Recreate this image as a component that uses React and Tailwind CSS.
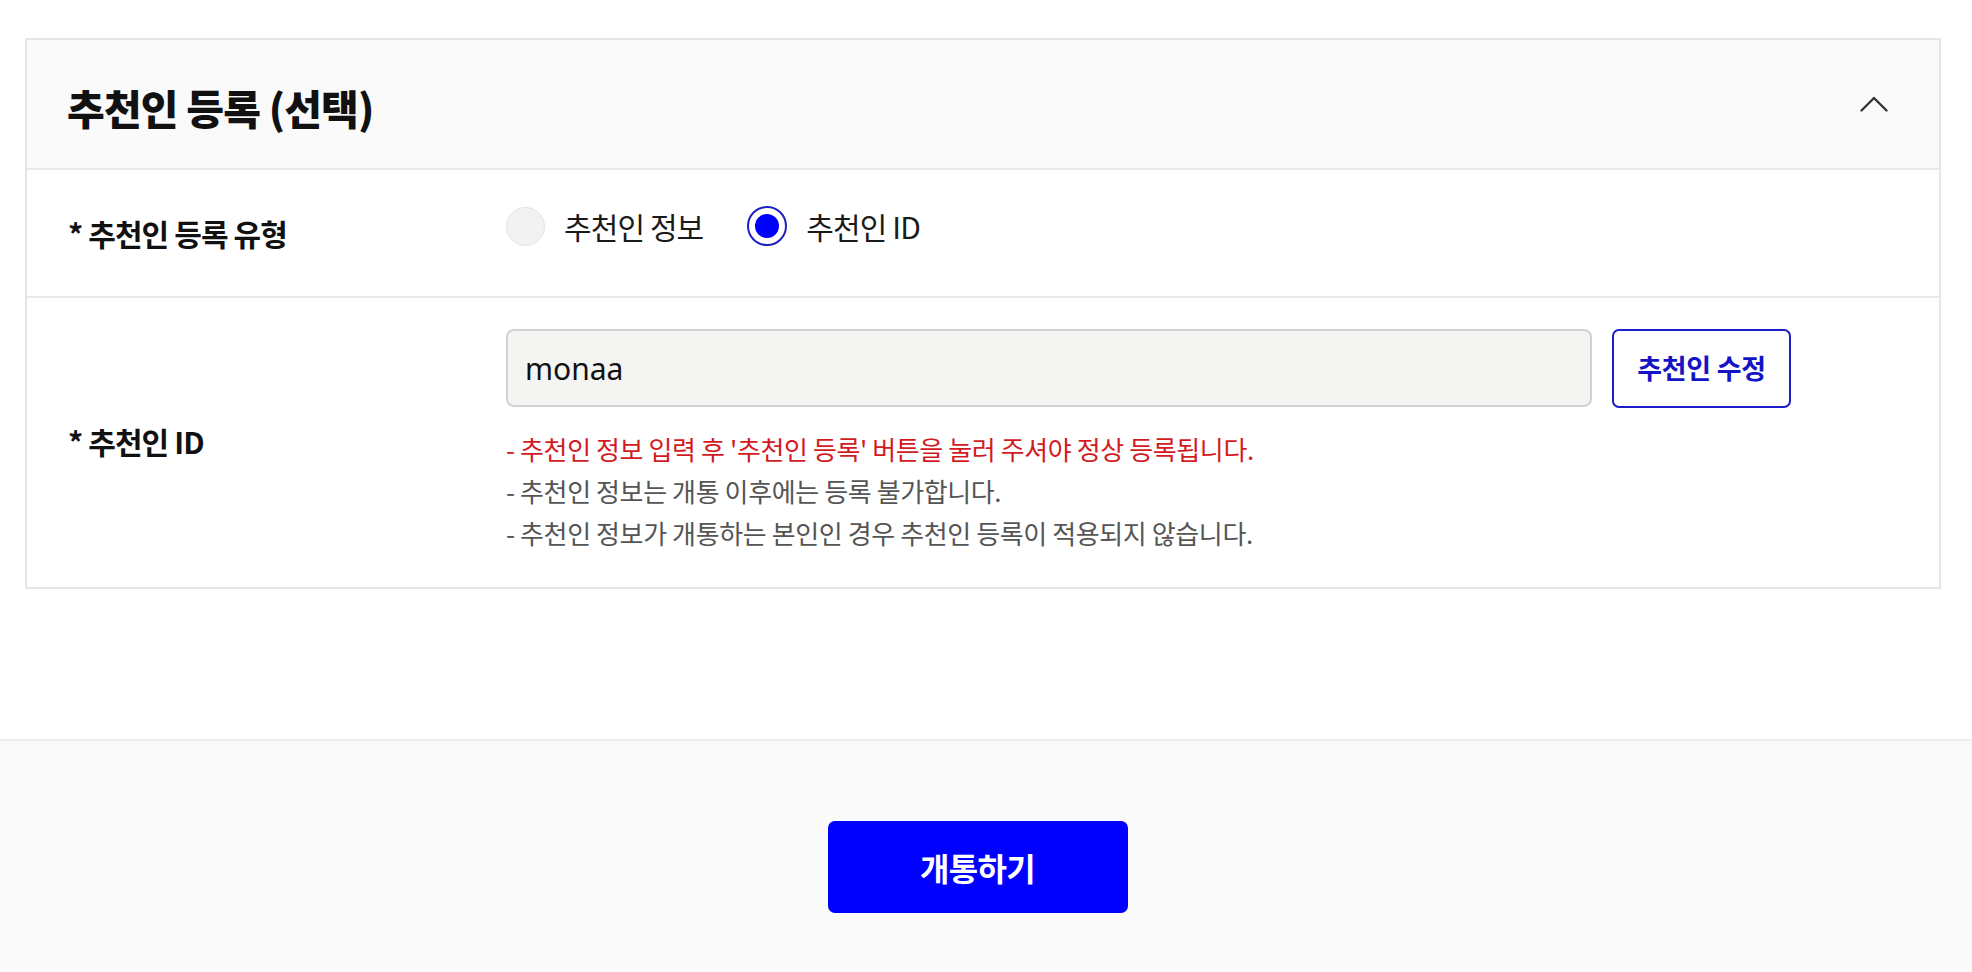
import React, { useState } from 'react';

const FONT = "font-['Noto_Sans_CJK_KR','Noto_Sans',sans-serif]";

const Radio = ({ checked, label, onClick }) => (
    <button type="button" onClick={onClick} className="flex items-center gap-[19px]">
        {checked ? (
            <span className="w-[40px] h-[40px] rounded-full border-2 border-[#2020c4] flex items-center justify-center bg-white">
                <span className="w-[24px] h-[24px] rounded-full bg-[#0000ff]" />
            </span>
        ) : (
            <span className="w-[39px] h-[39px] rounded-full bg-[#f2f2f2] border border-[#e4e4e4]" />
        )}
        <span className="text-[30px] leading-none tracking-[-0.03em] text-[#1a1a1a]">{label}</span>
    </button>
);

const Row = ({ label, children, className }) => (
    <div className={`flex items-center ${className}`}>
        <div className="w-[479px] shrink-0 pl-[41px] text-[30px] font-semibold tracking-[-0.03em] text-[#111]">
            {label}
        </div>
        <div className="flex-1">{children}</div>
    </div>
);

export default function App() {
    const [type, setType] = useState('id');
    const [open, setOpen] = useState(true);

    return (
        <div className={`min-h-screen flex flex-col bg-white ${FONT}`}>
            <div className="pt-[38px] pl-[25px] pr-[31px]">
                <section className="border-2 border-[#e6e6e6]">
                    <div className="h-[130px] bg-[#fafafa] border-b-2 border-[#e8e8e8] flex items-center justify-between pl-[40px] pr-[51px]">
                        <h2 className="text-[41px] font-extrabold tracking-[-0.02em] text-[#111] leading-none pt-[6px]">
                            추천인 등록 (선택)
                        </h2>
                        <button type="button" onClick={() => setOpen(!open)}>
                            <svg width="28" height="16" viewBox="0 0 28 16" fill="none">
                                <path d="M1.5 14.5 L14 2 L26.5 14.5" stroke="#333" strokeWidth="2.4" strokeLinecap="round" strokeLinejoin="round" />
                            </svg>
                        </button>
                    </div>

                    {open && (
                        <>
                            <Row label="* 추천인 등록 유형" className="h-[128px] border-b-2 border-[#e8e8e8]">
                                <div className="flex items-center gap-[44px] -mt-[14px]">
                                    <Radio checked={type === 'info'} label="추천인 정보" onClick={() => setType('info')} />
                                    <Radio checked={type === 'id'} label="추천인 ID" onClick={() => setType('id')} />
                                </div>
                            </Row>

                            <Row label="* 추천인 ID" className="pt-[31px] pb-[33px]">
                                <div className="flex items-start gap-[20px]">
                                    <div className="w-[1086px] h-[78px] rounded-[8px] bg-[#f4f4f3] border-2 border-[#d2d2d2] flex items-center pl-[17px] font-['Noto_Sans',sans-serif] text-[30px] text-[#111]">
                                        monaa
                                    </div>
                                    <button type="button" className="w-[179px] h-[79px] rounded-[7px] border-2 border-[#1e1ec8] text-[#1414c4] text-[27px] font-bold tracking-[-0.01em]">
                                        추천인 수정
                                    </button>
                                </div>
                                <ul className="mt-[20px] text-[26px] leading-[42px] tracking-[-0.015em]">
                                    <li className="text-[#d21b1f]">- 추천인 정보 입력 후 '추천인 등록' 버튼을 눌러 주셔야 정상 등록됩니다.</li>
                                    <li className="text-[#555]">- 추천인 정보는 개통 이후에는 등록 불가합니다.</li>
                                    <li className="text-[#555]">- 추천인 정보가 개통하는 본인인 경우 추천인 등록이 적용되지 않습니다.</li>
                                </ul>
                            </Row>
                        </>
                    )}
                </section>
            </div>

            <div className="mt-[150px] flex-1 border-t-2 border-[#eeeeee] bg-[#fafafa] flex justify-center pt-[80px] pb-[60px] pr-[17px]">
                <button type="button" className="w-[300px] h-[92px] rounded-[7px] bg-[#0000ff] text-white text-[32px] font-bold tracking-[-0.02em]">
                    개통하기
                </button>
            </div>
        </div>
    );
}
